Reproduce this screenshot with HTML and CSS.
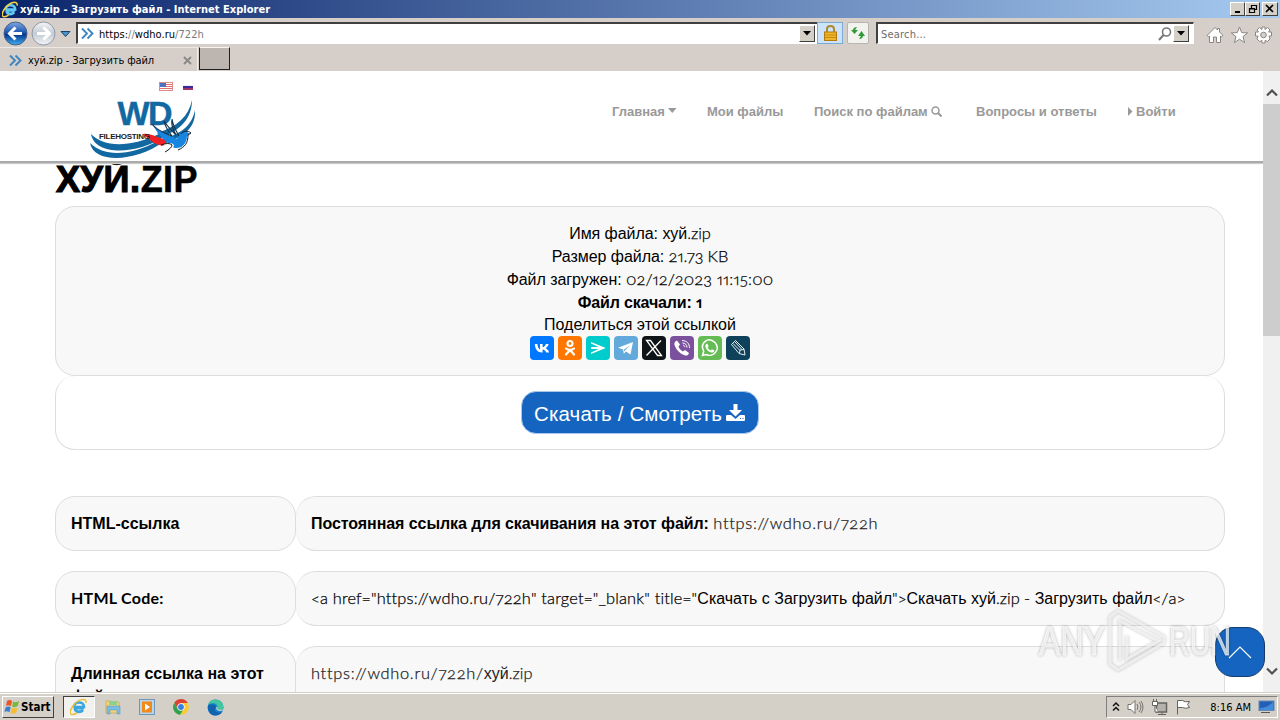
FILE: index.html
```html
<!DOCTYPE html>
<html lang="ru">
<head>
<meta charset="utf-8">
<title>хуй.zip - Загрузить файл</title>
<link rel="stylesheet" href="styles.css">
</head>
<body>
<div class="desktop">
  <div class="titlebar">
    <svg class="ie" width="17" height="17" viewBox="0 0 18 18"><path d="M14 10H5c0 4 5 5 8 2" fill="none" stroke="#62c8f4" stroke-width="3"/><path d="M4 9c0-6 10-6 10 0H5" fill="none" stroke="#62c8f4" stroke-width="2.6"/><path d="M16 5C17-1 8 1 3 8S0 19 7 15" fill="none" stroke="#f4d43a" stroke-width="1.6"/></svg>
    <span class="wintitle">хуй.zip - Загрузить файл - Internet Explorer</span>
    <div class="winbtns">
      <span class="wb"><svg width="12" height="10"><path d="M3 8h5" stroke="#000" stroke-width="2"/></svg></span>
      <span class="wb"><svg width="12" height="10"><path d="M4.500 4V1.500h5v4H8M4 1.500h6M2.500 4.500h5v4h-5zM2 5h6" fill="none" stroke="#000" stroke-width="1.200"/></svg></span>
      <span class="wb last"><svg width="12" height="10"><path d="M2 1l7 7M9 1L2 8" stroke="#000" stroke-width="1.700"/></svg></span>
    </div>
  </div>
  <div class="navrow">
    <svg class="arrows" width="76" height="29" viewBox="0 0 76 29">
      <defs><linearGradient id="gb" x2="0" y2="1"><stop stop-color="#7fa8dd"/><stop offset=".45" stop-color="#1d58b4"/><stop offset=".55" stop-color="#08378f"/><stop offset="1" stop-color="#3fb2f2"/></linearGradient><linearGradient id="gg" x2="0" y2="1"><stop stop-color="#f4f6f8"/><stop offset=".5" stop-color="#c3cad2"/><stop offset="1" stop-color="#f3f5f8"/></linearGradient></defs>
      <circle cx="15.500" cy="15.500" r="11.500" fill="url(#gb)" stroke="#4a5f86"/>
      <path d="M22 15.500H10M15.500 9.500l-6 6 6 6" fill="none" stroke="#fff" stroke-width="3"/>
      <circle cx="43.500" cy="15.500" r="11.500" fill="url(#gg)" stroke="#8d99a8"/>
      <path d="M37 15.500h12M43.500 9.500l6 6-6 6" fill="none" stroke="#fff" stroke-width="3"/>
      <path d="M61 13.500h9l-4.500 5z" fill="#4e93c8" stroke="#17456f"/>
    </svg>
    <div class="address">
      <svg width="13" height="13" viewBox="0 0 13 13"><path d="M1 1.500l5 5-5 5M6.500 1.500l5 5-5 5" fill="none" stroke="#3d86c0" stroke-width="1.900"/></svg>
      <span class="url"><i>https:</i>//<i>wdho.ru</i>/722h</span>
      <span class="drop"><svg width="8" height="5"><path d="M0 0h8L4 4.500z"/></svg></span>
    </div>
    <span class="lock"><svg width="15" height="18" viewBox="0 0 15 18"><path d="M4 9V5c0-4 7-4 7 0v4" fill="none" stroke="#b08a2a" stroke-width="2"/><rect x="1.500" y="8" width="12" height="8.500" fill="#efb52a" stroke="#b37a10"/><path d="M2 11h11M2 13.500h11" stroke="#c98a14"/></svg></span>
    <span class="refresh"><svg width="16" height="16" viewBox="0 0 16 16"><path d="M7 2L5 5h3L4.500 9 1 5h2c0-2 2-3 4-3z" fill="#2f9a37"/><path d="M9 14l2-3H8l3.500-5L15 11h-2c0 2-2 3-4 3z" fill="#2f9a37"/></svg></span>
    <div class="search"><span class="ph">Search...</span><svg width="14" height="14" viewBox="0 0 14 14"><circle cx="8.500" cy="5" r="4" fill="none" stroke="#777" stroke-width="1.600"/><path d="M5.500 8L1 13" stroke="#777" stroke-width="2"/></svg><span class="drop"><svg width="8" height="5"><path d="M0 0h8L4 4.500z"/></svg></span></div>
    <svg class="tools" width="68" height="18" viewBox="0 0 68 18" fill="#fff" stroke="#8a8782" stroke-width="1"><path d="M1 9.500L9 1.500l2.500 2.500V2.500h2V6L17 9.500l-1.500 1.200L14.500 10v6.500h-4V11h-3v5.500h-4V10l-1 .7z"/><path d="M33.500 1l2.200 5.600 6 .3-4.700 3.700 1.600 6-5.100-3.400-5.100 3.400 1.600-6-4.700-3.700 6-.3z"/><g transform="translate(57.500 9)"><path d="M-1.500-8h3v2.500L4-7.500 6.500-5 5-3h3v4H5.500L6.500 4 4 6.500 1.500 5.500V8h-3V5.500L-4 6.500-6.500 4-5.500 1H-8v-4h3L-6.500-5-4-7.500-1.500-5.500z"/><circle r="2.800" fill="#d4d0c8"/></g></svg>
  </div>
  <div class="tabrow">
    <div class="tab"><svg width="13" height="13" viewBox="0 0 13 13"><path d="M1 1.500l5 5-5 5M6.500 1.500l5 5-5 5" fill="none" stroke="#3d86c0" stroke-width="1.900"/></svg><span class="tabt">хуй.zip - Загрузить файл</span><svg class="tabx" width="9" height="9"><path d="M1 1l7 7M8 1L1 8" stroke="#8b8782" stroke-width="1.800"/></svg></div>
    <div class="newtab"></div>
  </div>
  <div class="view">
    <main class="page">
      <header class="site">
        <svg class="logo" width="112" height="80" viewBox="0 0 112 80">
          <g><rect x="73.500" y="4.500" width="13" height="8" fill="#fff" stroke="#dc8a8a"/><path d="M79 6.500h7M79 8.500h7M74 10.500h12" stroke="#e36c6c"/><rect x="74" y="5" width="6" height="4" fill="#4c72c8"/></g>
          <path d="M97 7h10v1H97z" fill="#eee"/><path d="M97 8h10v2H97z" fill="#3b2a9c"/><path d="M97 10h10v2H97z" fill="#a33468"/>
          <path d="M106 22c0 19-12 30-30 37l-5-4c20-6 32-17 35-33z" fill="#1268a0"/><path d="M109 32c1 17-10 26-29 33l-4-4c20-5 30-14 33-29z" fill="#1268a0"/>
          <text x="31.500" y="46.500" class="wd" textLength="55">WD</text>
          <path d="M5 56c12 13 38 14 68 0l4 3C53 76 9 79 5 56z" fill="#1268a0"/><path d="M4 65c14 14 40 13 68-2l5 1C52 83 8 87 4 65z" fill="#1268a0"/>
          <path d="M57 56c8-1 15 4 24 6l-2 6c-8 0-15-5-22-12z" fill="#ed2025"/>
          <path d="M66 46c6 8 16 10 25 15 1-5 5-8 10-7l3 2-3 2c0 7-5 13-12 12l-13-3c4 1 8 1 9 0-7-4-13-11-19-21z" fill="#1886e0"/>
          <path d="M76 67q9-4 12 0l-1 4-8 5 3-7z" fill="#fff"/>
          <path d="M66 46c5 7 13 9 20 12-4-5-7-10-8-15 4 6 8 10 12 14-3-5-5-10-4-16 1 7 4 12 7 17" fill="none" stroke="#16354c" stroke-width="1.200"/>
          <path d="M95 56c3-3 6-4 10-1l-3 2c0 8-3 12-10 15M75 67q8-3 11 0 0 3-7 7" fill="none" stroke="#15191c" stroke-width="1"/>
          <text x="13" y="61" class="fh" textLength="51">FILEHOSTING</text>
        </svg>
        <nav class="menu">
          <a class="m1">Главная<svg width="9" height="6"><path d="M0 0h8.500L4.300 5z" fill="#999"/></svg></a>
          <a class="m2">Мои файлы</a>
          <a class="m3">Поиск по файлам <svg width="11" height="11"><circle cx="4.500" cy="4.500" r="3.500" fill="none" stroke="#999" stroke-width="1.500"/><path d="M7 7l3.500 3.500" stroke="#999" stroke-width="2"/></svg></a>
          <a class="m4">Вопросы и ответы</a>
          <a class="m5"><svg width="8" height="9"><path d="M1 0l4.500 4.500L1 9z" fill="#999"/></svg>Войти</a>
        </nav>
      </header>
      <section class="content">
        <h1>ХУЙ.<span>ZIP</span></h1>
        <div class="info">
          <p>Имя файла: хуй<span class="r l1">.zip</span></p>
          <p>Размер файла: <span class="r l2">21.73 KB</span></p>
          <p>Файл загружен: <span class="r l3">02/12/2023 11:15:00</span></p>
          <p><b>Файл скачали: <span class="r">1</span></b></p>
          <p class="shp">Поделиться этой ссылкой</p>
          <div class="share">
            <svg style="background:#07f" viewBox="0 0 24 24"><path d="M4 8h2.600c.2 3 1.400 5 2.600 5.400V8h2.600v3.300c1.400-.2 2.700-1.700 3.300-3.300h2.700c-.5 2-1.700 3.400-3 4.300 1.500.7 2.900 2 3.600 4.200h-2.900c-.6-1.600-2-2.700-3.700-3v3h-.7C7 16.500 4.200 13 4 8z" fill="#fff" transform="translate(.8)"/></svg>
            <svg style="background:#f70" viewBox="0 0 24 24"><g fill="none" stroke="#fff" stroke-width="2.200"><circle cx="12" cy="7.500" r="2.500"/><path d="M8 12.500c2 1.700 6 1.700 8 0M12 14l-4 4.500M12 14l4 4.500" stroke-linecap="round"/></g></svg>
            <svg style="background:#0cc" viewBox="0 0 24 24"><path d="M5 6l14.800 6L5 18v-1.500l7.500-3.500H5v-2h7.500L5 7.500z" fill="#fff"/></svg>
            <svg style="background:#64a9dc" viewBox="0 0 24 24"><path d="M4 11.800L19 6l-2.500 12.500-4.500-3-2.200 2.300-.6-4.300L4 11.800zm6 1.800l.3 2.100.8-1.500 5.200-5z" fill="#fff"/></svg>
            <svg style="background:#0f1419" viewBox="0 0 24 24"><path d="M4.500 4.500h4l11 15h-4zM19 4.500l-14.500 15" fill="none" stroke="#fff" stroke-width="1.300"/></svg>
            <svg style="background:#7b519d" viewBox="0 0 24 24"><path d="M7 4.500l3 4-1.500 2c.8 2.200 2.300 4 4.500 5l2-1.500 4 3c-1 3-3 3-5 2C9 17 6 13 4.500 9 4 7 5 5 7 4.500z" fill="#fff"/><path d="M12 4.500c5 .3 7.500 3 7.500 7.500M12.500 7c3 .2 4.500 2 4.500 4.500M13 9.200c1.200.1 1.800.8 1.900 2" fill="none" stroke="#fff"/></svg>
            <svg style="background:#65bc54" viewBox="0 0 24 24"><path d="M4.500 19.500l1.200-4.200C1.500 7 10-0 17 6.500c6 7-2 15.500-8.700 12z" fill="none" stroke="#fff" stroke-width="1.500"/><path d="M9.200 7.500l1.400 2.700-1 1.300c.7 1.400 1.700 2.300 3 2.900l1.200-1.200 2.700 1.400c-.4 2-2.200 2.400-4 1.700-3-1.200-5-3.700-5.200-6 .1-1.400.8-2.600 1.900-2.800z" fill="#fff"/></svg>
            <svg style="background:#0d425a" viewBox="0 0 24 24"><path d="M5.500 8.500L9.500 4.500 18 13l1 6-6-1.500zM13.500 17l.5-3 4-.5M7 7.500l7 7M9 6l7 7.500" fill="none" stroke="#fff" stroke-width=".9"/></svg>
          </div>
        </div>
        <div class="getbox"><a class="get"><span>Скачать / Смотреть</span><svg width="20" height="18" viewBox="0 0 20 18"><path d="M7.500 0h4v6H16l-6.500 6.500L3 6h4.500z" fill="#fff"/><path d="M1 11h4l4.500 4 4.500-4h4q1 0 1 1v4q0 1-1 1H1q-1 0-1-1v-4q0-1 1-1z" fill="#fff"/><path d="M14 14.500h1M16.500 14.500h1" stroke="#1565c0"/></svg></a></div>
        <div class="row"><div class="c1"><b>HTML-ссылка</b></div><div class="c2"><b class="perm">Постоянная ссылка для скачивания на этот файл:</b> <span class="r u1">https://wdho.ru/722h</span></div></div>
        <div class="row"><div class="c1"><b class="r code">HTML Code:</b></div><div class="c2 dark"><span class="r k1">&lt;a href="https://wdho.ru/722h" target="_blank" title="</span>Скачать с Загрузить файл<span class="r k2">"&gt;</span>Скачать хуй<span class="r k3">.zip - </span>Загрузить файл<span class="r k4">&lt;/a&gt;</span></div></div>
        <div class="row tall"><div class="c1"><b>Длинная ссылка на этот файл:</b></div><div class="c2"><span class="r u2">https://wdho.ru/722h/</span>хуй<span class="r l1">.zip</span></div></div>
      </section>
    </main>
    <aside class="scroll"><svg class="su" width="12" height="9"><path d="M1 7.500l5-5 5 5" fill="none" stroke="#505050" stroke-width="2.200"/></svg><div class="thumb"></div><svg class="sd" width="12" height="9"><path d="M1 1.500l5 5 5-5" fill="none" stroke="#505050" stroke-width="2.200"/></svg></aside>
    <div class="totop"><svg width="24" height="14"><path d="M1 13L12 2l11 11" fill="none" stroke="#fff" stroke-width="1.200"/></svg></div>
    <svg class="mark" width="210" height="70" viewBox="0 0 210 70">
      <text x="4" y="48" textLength="66" lengthAdjust="spacingAndGlyphs">ANY</text>
      <text x="134" y="48" textLength="62" lengthAdjust="spacingAndGlyphs">RUN</text>
      <path d="M75 53V10l8-6 46 26v6L83 63l-8-6V21M85 53V14l38 20-31 18V29" fill="none"/>
    </svg>
  </div>
  <footer class="taskbar">
    <div class="start"><svg width="16" height="16" viewBox="0 0 16 16"><path d="M3 2q3-2 5 0L7 7Q4 5.500 2 7z" fill="#e8562a"/><path d="M9 2.500q3 1.500 6-.5l-1.300 5q-3 2-5.500.5z" fill="#78b83b"/><path d="M1.700 8.200q3-1.500 5 0l-1.300 5q-3-1.700-5 0z" fill="#397fd0"/><path d="M8 8.700q3 1.500 5.500 0l-1.400 5q-3 1.700-5.500 0z" fill="#f6bd2c"/></svg><b>Start</b></div>
    <div class="iebtn"><svg width="18" height="18" viewBox="0 0 18 18"><path d="M14 10H5c0 4 5 5 8 2" fill="none" stroke="#3ba7e0" stroke-width="3"/><path d="M4 9c0-6 10-6 10 0H5" fill="none" stroke="#3ba7e0" stroke-width="2.600"/><path d="M16 5C17-1 8 1 3 8S0 19 7 15" fill="none" stroke="#e9c03a" stroke-width="1.500"/></svg></div>
    <svg class="ti" width="16" height="16" viewBox="0 0 16 16"><path d="M1 2h5l1 1h7v11H1z" fill="#efd57c" stroke="#c8a850" stroke-width=".7"/><path d="M4 2h8v4H4z" fill="#8ed08c"/><path d="M2 7h13v8h-3v-4H5v4H2z" fill="#79bde2" stroke="#5c9fc5" stroke-width=".6"/></svg>
    <svg class="ti" width="16" height="16" viewBox="0 0 16 16"><rect x=".5" y=".5" width="15" height="15" fill="#b8d5ec" stroke="#7197b8"/><rect x="3" y="2.500" width="10" height="11" fill="#f18a1c"/><path d="M6 4.500l5 3.500-5 3.500z" fill="#fff"/></svg>
    <svg class="ti" width="16" height="16" viewBox="0 0 16 16"><circle cx="8" cy="8" r="7.800" fill="#f8cb2f"/><path d="M1.200 4a7.800 7.800 0 0 1 13.600 0H8L5 10z" fill="#dc4235"/><path d="M1.200 4a7.800 7.800 0 0 0 6 11.800L10.500 10H4.700z" fill="#31a150"/><circle cx="8" cy="8" r="3.700" fill="#fff"/><circle cx="8" cy="8" r="2.900" fill="#397de5"/></svg>
    <svg class="ti" width="17" height="17" viewBox="0 0 17 17"><circle cx="8.500" cy="8.500" r="8" fill="#1682cb"/><path d="M1 6C4-3 17 0 16.500 9c-1 3-6 3-6 1 1-6-6-7-9.500-4z" fill="#42c6a0"/><path d="M1 7c4-3 8-1 8 1-3 3 0 7 6 5-2 4-9 5-12 1-2-3-2-5-2-7z" fill="#1262ad"/><path d="M10 8c-1 3 2 4 6 3" fill="none" stroke="#d4d0c8" stroke-width="1.200"/></svg>
    <div class="tray">
      <svg width="8" height="12"><path d="M1 5l3-3 3 3M1 9.500l3-3 3 3" fill="none" stroke="#111" stroke-width="1.500"/></svg>
      <svg width="17" height="16" fill="#fff" stroke="#77736d"><path d="M1 5.500h3L8 1.500v13l-4-4H1z"/><path d="M10 5q2 3 0 6M12 3q4 5 0 10M14 2q4 6 0 12" fill="none"/></svg>
      <svg width="17" height="17" fill="#eee" stroke="#66625c"><rect x="5.500" y="4" width="10" height="9" fill="#b5b2ad" stroke-width="1.500"/><path d="M7 15.500h8M11 13v2"/><path d="M1.500 2.500h5v4h-5zM2.500 0v3M5.500 0v3M4 7v6h3" fill="#fff"/></svg>
      <svg width="17" height="16" fill="#fff" stroke="#66625c"><path d="M2.500 15.500V1.500h5q2 2 7 1l-2 3 2 3q-4 1.500-7 0h-5"/></svg>
      <span class="clock">8:16 AM</span>
      <svg width="17" height="14"><rect x="1" y="1" width="15" height="9.500" fill="#245fb7" stroke="#6488b8"/><path d="M2 8q7 0 13-6v8H2z" fill="#438ad8"/><path d="M3 12.500h9" stroke="#555"/></svg>
    </div>
  </footer>
</div>
</body>
</html>
```
FILE: styles.css
```css
* { box-sizing: border-box; }
body { margin: 0; font-family: "Liberation Sans", Arial, sans-serif; font-size: 16px; color: #000; }
svg { display: block; flex: none; }
.desktop { width: 1280px; height: 720px; overflow: hidden; display: flex; flex-direction: column; background: #d4d0c8; }
.titlebar, .navrow, .tabrow, .taskbar { font-family: "DejaVu Sans Condensed", "DejaVu Sans", sans-serif; font-size: 11px; flex: none; }
.titlebar { height: 18px; display: flex; align-items: center; padding: 0 2px; background: linear-gradient(90deg, #0a246a, #a6caf0); color: #fff; }
.wintitle { font-weight: bold; font-size: 11px; margin-left: 1px; white-space: nowrap; letter-spacing: .03px; }
.winbtns { margin-left: auto; display: flex; }
.wb { width: 15px; height: 14px; background: #d4d0c8; border: 1px solid; border-color: #fff #404040 #404040 #fff; padding: 1px 0 0 1px; overflow: hidden; }
.wb.last { margin-left: 2px; width: 16px; }
.navrow { height: 29px; display: flex; align-items: flex-start; background: #d6cfc9; }
.address { width: 742px; height: 22px; margin-top: 4px; display: flex; align-items: center; background: #fff; border: 1px solid #fff; border-top: 2px solid #404040; border-left: 2px solid #404040; padding: 0 3px 0 3px; }
.url { color: #7b7b7b; margin: 1px 0 0 5px; letter-spacing: .04px; font-size: 11px; }
.url i { font-style: normal; color: #000; }
.drop { width: 16px; height: 17px; display: flex; align-items: center; justify-content: center; background: #d4d0c8; border: 1px solid; border-color: #fff #404040 #404040 #fff; }
.address .drop { margin-left: auto; margin-right: -1px; }
.lock { width: 26px; height: 22px; margin: 4px 0 0 -1px; background: #cbe3fb; border: 1px solid #7aaad8; display: flex; justify-content: center; align-items: center; }
.refresh { width: 22px; height: 22px; margin: 4px 0 0 4px; background: #f2f2ee; border: 1px solid #b8b4ae; border-radius: 2px; display: flex; justify-content: center; align-items: center; }
.search { width: 318px; height: 22px; margin: 4px 0 0 7px; display: flex; align-items: center; background: #fff; border: 1px solid #fff; border-top: 2px solid #404040; border-left: 2px solid #404040; padding: 0 4px 0 3px; }
.ph { color: #6d6d6d; flex: 1; letter-spacing: .2px; margin-top: 1px; }
.search .drop { margin-left: 1px; }
.tools { margin: 8px 0 0 12px; }
.tabrow { height: 24px; display: flex; background: #d6cfc9; }
.tab { width: 198px; display: flex; align-items: center; padding: 1px 5px 0 9px; border-right: 1px solid #f0ece8; border-top: 1px solid #eee8e4; }
.tabt { margin-left: 6px; white-space: nowrap; letter-spacing: -.12px; }
.tabx { margin-left: auto; }
.newtab { width: 31px; height: 23px; margin: 0 0 0 1px; background: #bdb5b0; border: 1px solid; border-color: #f5f2ef #202020 #202020 #202020; }
.view { position: relative; height: 621px; flex: none; display: flex; background: #fff; }
.page { width: 1263px; height: 621px; overflow: hidden; }
.site { position: relative; z-index: 1; height: 92px; border-bottom: 2px solid #aaa; display: flex; padding: 7px 87px 0 86px; box-shadow: 0 1px 1px #ccc; background: #fff; }
.wd { font: bold 34px "Liberation Sans"; fill: #1268a0; stroke: #1268a0; stroke-width: .4px; }
.fh { font: bold 8px "Liberation Sans"; fill: #222; }
.menu { margin-left: auto; display: flex; height: 66px; align-items: center; font-size: 13px; font-weight: bold; color: #999; white-space: nowrap; }
.menu a { display: flex; align-items: center; }
.menu svg { margin-left: 3px; }
.m1 { width: 95px; } .m2 { width: 107px; } .m3 { width: 162px; } .m4 { width: 151px; } .m5 { width: 49px; }
.menu .m5 svg { margin: 0 1px 0 0; }
.content { padding: 0 38px 0 55px; }
h1 { height: 43px; margin: 0; padding-left: 1px; font-size: 36px; line-height: 33px; white-space: nowrap; -webkit-text-stroke: 1.200px #000; letter-spacing: .6px; }
h1 span { -webkit-text-stroke: .5px #000; letter-spacing: .4px; }
.info { height: 170px; padding-top: 15px; border: 1px solid #ddd; border-radius: 20px; background: #f8f8f8; text-align: center; }
.info p { margin: 0; height: 23px; line-height: 23px; white-space: nowrap; letter-spacing: -.05px; }
.info .shp { height: 22px; line-height: 22px; letter-spacing: 0; }
.r { font-family: Lato, sans-serif; font-size: 16.400px; font-weight: 300; font-feature-settings: "onum" 1, "pnum" 1; line-height: 1; -webkit-text-stroke: .25px currentColor; }
b .r, b.r { font-size: 16px; font-weight: bold; -webkit-text-stroke: 0; }
.info .l2 { letter-spacing: -.05px; }
.info .l3 { letter-spacing: .2px; }
.u1, .u2 { letter-spacing: .7px; }
.k1 { letter-spacing: .17px; }
.k2, .k3, .k4 { letter-spacing: 0; }
.code { letter-spacing: .25px; }
.perm { color: #000; letter-spacing: -.07px; }
.info b { letter-spacing: -.15px; }
.share { display: flex; justify-content: center; gap: 4px; }
.share svg { width: 24px; height: 24px; border-radius: 4px; }
.getbox { height: 74px; padding-top: 15px; border: 1px solid #ddd; border-top: 0; border-radius: 20px; display: flex; justify-content: center; align-items: flex-start; }
.get { width: 238px; height: 43px; display: flex; align-items: center; justify-content: center; gap: 4px; background: #1565c0; border: 1px solid #aac8ee; border-radius: 15px; color: #fff; font-size: 20.500px; letter-spacing: .15px; white-space: nowrap; }
.get span { padding-top: 2px; }
.row { display: flex; height: 55px; margin-bottom: 20px; line-height: 23px; }
.getbox + .row { margin-top: 46px; }
.tall { height: 78px; }
.c1, .c2 { border: 1px solid #ddd; border-radius: 20px; background: #f8f8f8; padding: 15px; }
.c1 { width: 241px; }
.c2 { width: 929px; border-left: 0; color: #222; white-space: nowrap; }
.dark { color: #000; }
.totop { position: absolute; left: 1215px; top: 556px; width: 50px; height: 50px; border-radius: 18px; background: #1565c0; border: 1px solid #153a66; display: flex; align-items: center; justify-content: center; }
.mark { position: absolute; left: 1035px; top: 536px; fill: rgba(255,255,255,.7); stroke: rgba(255,255,255,.6); filter: drop-shadow(0 0 1.500px rgba(0,0,0,.4)); }
.mark text { font: 41px "Liberation Sans"; }
.mark path { stroke-width: 3; }
.scroll { width: 17px; background: #f0f0f0; display: flex; flex-direction: column; align-items: center; }
.su { margin: 17px 0 7px; }
.thumb { width: 17px; height: 232px; background: #cdcdcd; }
.sd { margin: auto 0 16px; }
.taskbar { height: 28px; display: flex; align-items: center; padding: 1px 2px 0 2px; border-top: 1px solid #d4d0c8; box-shadow: inset 0 1px #fff; }
.start { width: 52px; height: 22px; display: flex; align-items: center; padding-left: 1px; gap: 1px; border: 1px solid; border-color: #fff #404040 #404040 #fff; font-size: 11.500px; }
.iebtn { width: 32px; height: 22px; margin-left: 9px; display: flex; align-items: center; justify-content: center; background: #f3f1ee; border: 1px solid; border-color: #404040 #fff #fff #404040; }
.ti { margin-left: 10px; }
.ti + .ti { margin-left: 18px; }
.tray { margin-left: auto; width: 172px; height: 22px; display: flex; align-items: center; padding: 0 2px 0 5px; gap: 7px; border: 1px solid; border-color: #808080 #fff #fff #808080; }
.clock { margin-left: auto; white-space: nowrap; }
```
